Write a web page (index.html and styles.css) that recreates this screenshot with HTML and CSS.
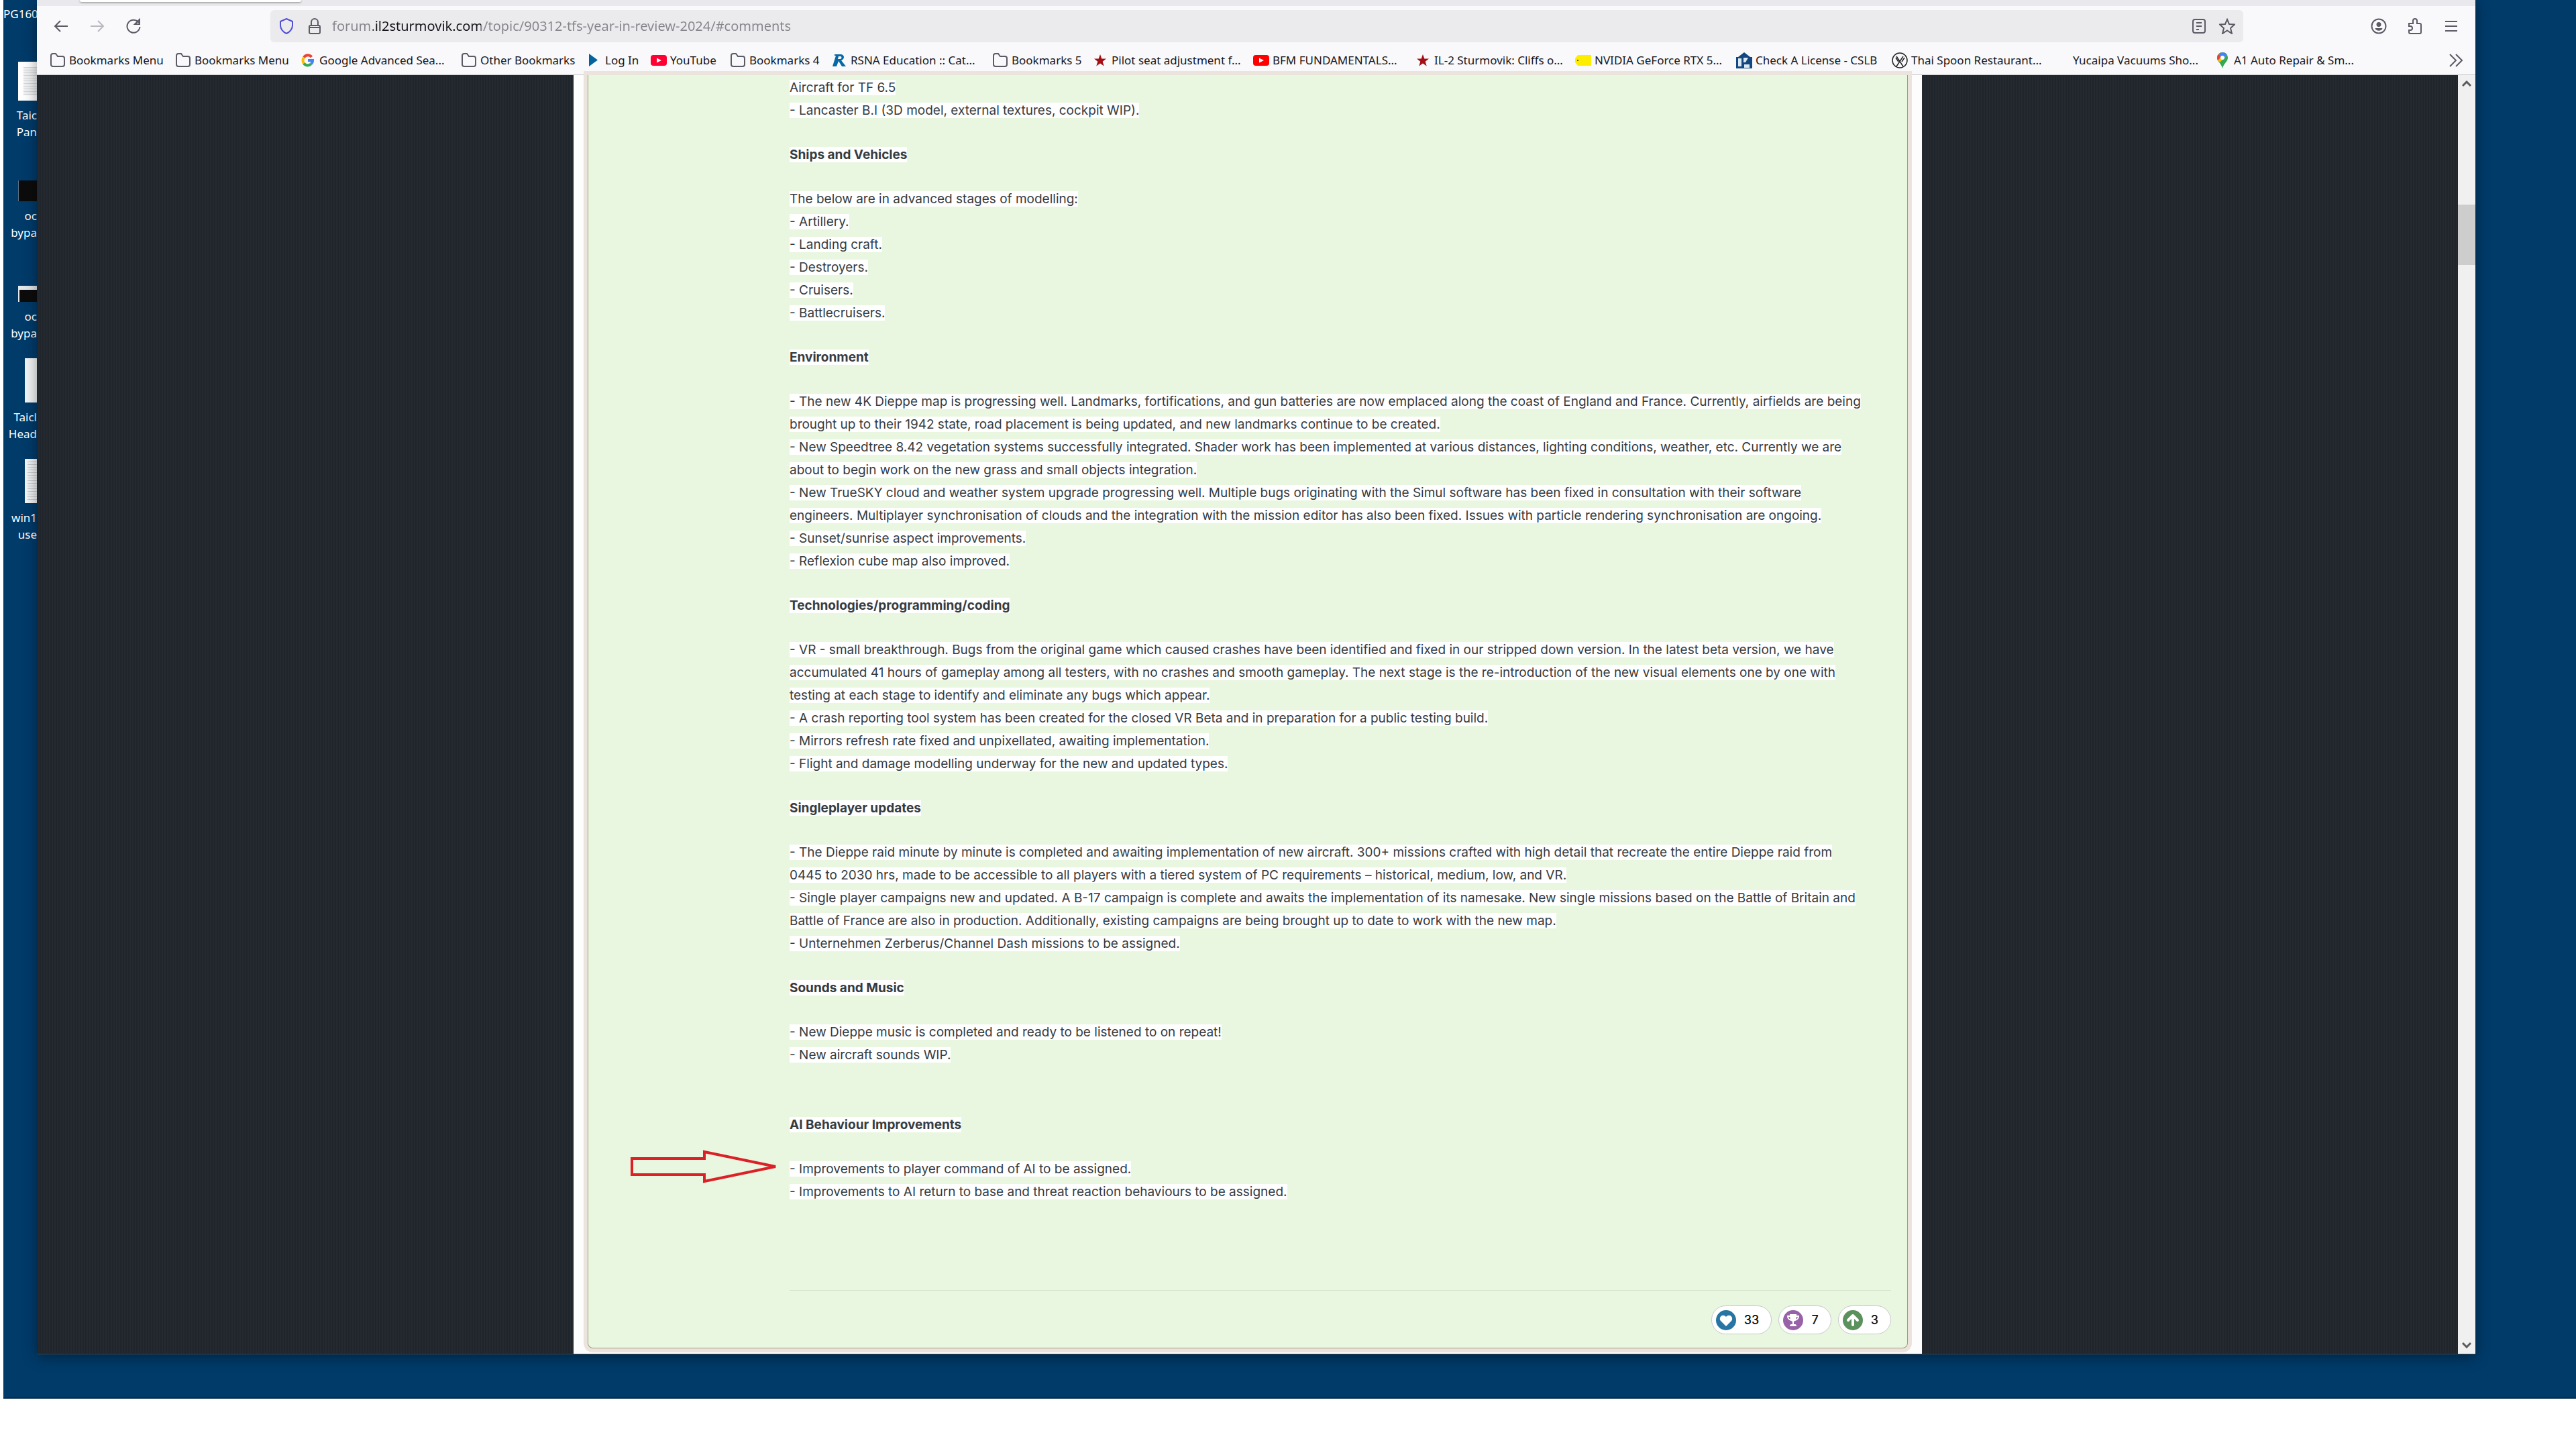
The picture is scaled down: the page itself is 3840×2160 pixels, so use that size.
FILE: index.html
```html
<!DOCTYPE html>
<html lang="en">
<head>
  <meta charset="UTF-8">
  <meta name="viewport" content="width=device-width, initial-scale=1.0">
  <title>TFS Year in Review 2024</title>
  <link rel="stylesheet" href="styles.css">
</head>
<body>
  <!-- shared icons -->
  <svg class="sprite" aria-hidden="true">
    <symbol id="folder" viewBox="0 0 24 24"><path d="M2 5a3 3 0 0 1 3-3h4l3 4h7a3 3 0 0 1 3 3v9a3 3 0 0 1-3 3H5a3 3 0 0 1-3-3z" fill="none" stroke="#5b5b66" stroke-width="2"/></symbol>
    <symbol id="youtube" viewBox="0 0 24 24"><rect y="4" width="24" height="16" rx="4" fill="currentColor"/><path d="M9 8.500l7 3.500-7 3.500z" fill="#fff"/></symbol>
    <symbol id="red-star" viewBox="0 0 24 24"><path d="M12 3l2.300 6.600H21l-5.300 4.200 2 6.800L12 16.500l-5.700 4.100 2-6.800L3 9.600h6.700z" fill="#a30f14"/></symbol>
  </svg>

  <div class="desktop">
    <div class="desktop-icons">
      <div class="desktop-icon first"><span>PG160</span></div>
      <div class="desktop-icon"><div class="thumb"><i class="page chart"></i></div><span>Taic</span><span>Pan</span></div>
      <div class="desktop-icon"><div class="thumb"><i class="console"></i></div><span>oc</span><span>bypa</span></div>
      <div class="desktop-icon"><div class="thumb"><i class="console short"></i></div><span>oc</span><span>bypa</span></div>
      <div class="desktop-icon"><div class="thumb"><i class="page narrow"></i></div><span>Taicl</span><span>Head</span></div>
      <div class="desktop-icon"><div class="thumb"><i class="page narrow lines"></i></div><span>win1</span><span>use</span></div>
    </div>

    <div class="browser">
      <div class="tab-strip"><div class="tab"></div></div>
      <div class="toolbar">
        <div class="nav-buttons">
          <button aria-label="Back"><svg viewBox="0 0 24 24"><path d="M22 12H3M11 4l-8 8 8 8"/></svg></button>
          <button aria-label="Forward" disabled><svg viewBox="0 0 24 24"><path d="M2 12h19M13 4l8 8-8 8"/></svg></button>
          <button aria-label="Reload"><svg viewBox="0 0 24 24"><path d="M20 7a9.500 9.500 0 1 0 1.500 6M21 2v7h-7z"/></svg></button>
        </div>
        <div class="url-bar">
          <svg viewBox="0 0 24 24"><path d="M12 1l9 4v6c0 5-4 10-9 12-5-2-9-7-9-12V5z" stroke="#5050d8"/></svg>
          <svg viewBox="0 0 24 24"><rect x="4" y="11" width="16" height="12" rx="2"/><path d="M7 11V6a5 5 0 0 1 10 0v5M4 14h16"/></svg>
          <input type="text" aria-label="Address" value="forum.il2sturmovik.com/topic/90312-tfs-year-in-review-2024/#comments">
          <button aria-label="Reader view"><svg viewBox="0 0 24 24"><rect x="3" y="2" width="18" height="20" rx="3"/><path d="M8 7h8M8 12h8M8 17h4"/></svg></button>
          <button aria-label="Bookmark this page"><svg viewBox="0 0 24 24"><path d="M12 2l3 7 8 .500-6 5.500 2 8-7-4.500L5 23l2-8-6-5.500L9 9z"/></svg></button>
        </div>
        <div class="tool-buttons">
          <button aria-label="Account"><svg viewBox="0 0 24 24"><circle cx="12" cy="12" r="10.500"/><path d="M12 6a3 3 0 0 0 0 7 3 3 0 0 0 0-7zM6.500 15h11c-1 5-10 5-11 0z" fill="#5b5b66" stroke="none"/></svg></button>
          <button aria-label="Extensions"><svg viewBox="0 0 24 24"><path d="M3 8h6V4a3 3 0 0 1 6 0v4h4a2 2 0 0 1 2 2v11a2 2 0 0 1-2 2H5a2 2 0 0 1-2-2v-3h2a3 3 0 0 0 0-6H3z"/></svg></button>
          <button aria-label="Menu"><svg viewBox="0 0 24 24"><path d="M3 5h18M3 12h18M3 19h18"/></svg></button>
        </div>
      </div>

      <nav class="bookmarks">
        <a href="#"><svg><use href="#folder"/></svg>Bookmarks Menu</a>
        <a href="#"><svg><use href="#folder"/></svg>Bookmarks Menu</a>
        <a href="#"><svg viewBox="0 0 24 24"><g fill="none" stroke-width="4"><path d="M6 7.500A7 7 0 0 1 17.500 7" stroke="#ea4335"/><path d="M6 7.500a8 8 0 0 0 0 9" stroke="#fbbc05"/><path d="M6 16.500a7 7 0 0 0 10.500 1" stroke="#34a853"/><path d="M16.500 17.500A7 7 0 0 0 19 12h-7" stroke="#4285f4"/></g></svg>Google Advanced Sea...</a>
        <a href="#"><svg><use href="#folder"/></svg>Other Bookmarks</a>
        <a href="#"><svg viewBox="0 0 24 24"><path d="M5 2l13 9.500L5 21z" fill="#05629b"/></svg>Log In</a>
        <a href="#"><svg class="yt-new"><use href="#youtube"/></svg>YouTube</a>
        <a href="#"><svg><use href="#folder"/></svg>Bookmarks 4</a>
        <a href="#"><svg viewBox="0 0 24 24"><path d="M5 3h9c6 0 7 7 1 9l7 9h-6l-5-8-3 8H2l5-16H5z" fill="#0768a8"/><path d="M11 6h3c2 0 2 4-1 4h-3z" fill="#fff"/></svg>RSNA Education :: Cat...</a>
        <a href="#"><svg><use href="#folder"/></svg>Bookmarks 5</a>
        <a href="#"><svg><use href="#red-star"/></svg>Pilot seat adjustment f...</a>
        <a href="#"><svg class="yt"><use href="#youtube"/></svg>BFM FUNDAMENTALS...</a>
        <a href="#"><svg><use href="#red-star"/></svg>IL-2 Sturmovik: Cliffs o...</a>
        <a href="#"><svg viewBox="0 0 24 24"><path d="M4 4h20v16H4l-4-5V9z" fill="#ffed00"/><circle cx="4" cy="12" r="1" fill="#222"/></svg>NVIDIA GeForce RTX 5...</a>
        <a href="#"><svg viewBox="0 0 24 24"><path d="M0 24V7h3l9-7 9 7h3v17z" fill="#12477f"/><path d="M3 9h5v12H3zM11 8h7l-4 7h-3zM12 18h8v5h-8z" fill="#dce8f2"/></svg>Check A License - CSLB</a>
        <a href="#"><svg viewBox="0 0 24 24"><circle cx="12" cy="12" r="11" fill="none" stroke="#222" stroke-width="1.500"/><path d="M7 21L17 6M17 21L7 6M6 8l4 6M19 8l-4 6" fill="none" stroke="#222" stroke-width="1.500"/></svg>Thai Spoon Restaurant...</a>
        <a href="#"><svg></svg>Yucaipa Vacuums Sho...</a>
        <a href="#"><svg viewBox="0 0 24 24"><path d="M12 0a8 8 0 0 0-8 8c0 6 6 8 8 16 2-8 8-10 8-16a8 8 0 0 0-8-8z" fill="#34a853"/><path d="M12 0a8 8 0 0 1 7 4L8 15C5 12 4 10 4 8a8 8 0 0 1 8-8z" fill="#fbbc04"/><path d="M12 0a8 8 0 0 1 7 4l-7 7-6-8a8 8 0 0 1 6-3z" fill="#4285f4"/><path d="M6 3l4 4-5 5C3 9 4 5 6 3z" fill="#ea4335"/><circle cx="12" cy="8" r="3" fill="#fff"/></svg>A1 Auto Repair &amp; Sm...</a>
        <button aria-label="More bookmarks"><svg viewBox="0 0 24 24"><path d="M3 3l9 9-9 9M12 3l9 9-9 9"/></svg></button>
      </nav>

      <div class="viewport">
        <main class="page-body">
          <div class="forum">
            <article class="post">
              <div class="post-content">
                <p><span>Aircraft for TF 6.5<br>
                  - Lancaster B.I (3D model, external textures, cockpit WIP).</span></p>

                <h2><span>Ships and Vehicles</span></h2>
                <p><span>The below are in advanced stages of modelling:<br>
                  - Artillery.<br>
                  - Landing craft.<br>
                  - Destroyers.<br>
                  - Cruisers.<br>
                  - Battlecruisers.</span></p>

                <h2><span>Environment</span></h2>
                <p><span>- The new 4K Dieppe map is progressing well. Landmarks, fortifications, and gun batteries are now emplaced along the coast of England and France. Currently, airfields are being<br>
                  brought up to their 1942 state, road placement is being updated, and new landmarks continue to be created.<br>
                  - New Speedtree 8.42 vegetation systems successfully integrated. Shader work has been implemented at various distances, lighting conditions, weather, etc. Currently we are<br>
                  about to begin work on the new grass and small objects integration.<br>
                  - New TrueSKY cloud and weather system upgrade progressing well. Multiple bugs originating with the Simul software has been fixed in consultation with their software<br>
                  engineers. Multiplayer synchronisation of clouds and the integration with the mission editor has also been fixed. Issues with particle rendering synchronisation are ongoing.<br>
                  - Sunset/sunrise aspect improvements.<br>
                  - Reflexion cube map also improved.</span></p>

                <h2><span>Technologies/programming/coding</span></h2>
                <p><span>- VR - small breakthrough. Bugs from the original game which caused crashes have been identified and fixed in our stripped down version. In the latest beta version, we have<br>
                  accumulated 41 hours of gameplay among all testers, with no crashes and smooth gameplay. The next stage is the re-introduction of the new visual elements one by one with<br>
                  testing at each stage to identify and eliminate any bugs which appear.<br>
                  - A crash reporting tool system has been created for the closed VR Beta and in preparation for a public testing build.<br>
                  - Mirrors refresh rate fixed and unpixellated, awaiting implementation.<br>
                  - Flight and damage modelling underway for the new and updated types.</span></p>

                <h2><span>Singleplayer updates</span></h2>
                <p><span>- The Dieppe raid minute by minute is completed and awaiting implementation of new aircraft. 300+ missions crafted with high detail that recreate the entire Dieppe raid from<br>
                  0445 to 2030 hrs, made to be accessible to all players with a tiered system of PC requirements – historical, medium, low, and VR.<br>
                  - Single player campaigns new and updated. A B-17 campaign is complete and awaits the implementation of its namesake. New single missions based on the Battle of Britain and<br>
                  Battle of France are also in production. Additionally, existing campaigns are being brought up to date to work with the new map.<br>
                  - Unternehmen Zerberus/Channel Dash missions to be assigned.</span></p>

                <h2><span>Sounds and Music</span></h2>
                <p><span>- New Dieppe music is completed and ready to be listened to on repeat!<br>
                  - New aircraft sounds WIP.</span></p>

                <h2 class="spaced"><span>AI Behaviour Improvements</span></h2>
                <p class="marked">
                  <svg class="arrow" viewBox="0 0 220 50"><path d="M3 13h108V3l106 22-106 22V37H3z"/></svg>
                  <span>- Improvements to player command of AI to be assigned.<br>
                  - Improvements to AI return to base and threat reaction behaviours to be assigned.</span></p>
              </div>

              <footer class="reactions">
                <button><svg viewBox="0 0 30 30"><circle cx="15" cy="15" r="15" fill="#2875a3"/><path d="M15 24L7 16c-4-5 3-12 8-6 5-6 12 1 8 6z" fill="#fff"/></svg>33</button>
                <button><svg viewBox="0 0 30 30"><circle cx="15" cy="15" r="15" fill="#9862a8"/><path d="M10 6h10c0 7-1 10-4 11v4h2c1 0 2 1 2 3H10c0-2 1-3 2-3h2v-4c-3-1-4-4-4-11z" fill="#fff"/><path d="M11 9H7c0 4 2 5 5 6M19 9h4c0 4-2 5-5 6" fill="none" stroke="#fff" stroke-width="2"/></svg>7</button>
                <button><svg viewBox="0 0 30 30"><circle cx="15" cy="15" r="15" fill="#5b915c"/><path d="M15 22V9M8 15l7-7 7 7" fill="none" stroke="#fff" stroke-width="4" stroke-linecap="round" stroke-linejoin="round"/></svg>3</button>
              </footer>
            </article>
          </div>
        </main>
        <div class="scrollbar">
          <svg viewBox="0 0 14 10"><path d="M1 8l6-6 6 6"/></svg>
          <div class="thumb-bar"></div>
          <svg viewBox="0 0 14 10"><path d="M1 2l6 6 6-6"/></svg>
        </div>
      </div>
    </div>
  </div>
</body>
</html>
```

FILE: styles.css
```css
* {
  box-sizing: border-box;
}

body {
  margin: 0;
  background-color: #fff;
  font-family: "Noto Sans", "Open Sans", sans-serif;
}

button {
  display: flex;
  align-items: center;
  padding: 0;
  border: none;
  background: none;
}

.sprite {
  display: none;
}

/* Desktop */
.desktop {
  display: flex;
  min-height: calc(100vh - 75px);
  margin-left: 5px;
  padding: 0 150px 64px 0;
  background-color: #003b6a;
  border-bottom: 2px solid #032a4a;
}

.desktop-icons {
  width: 50px;
}

.desktop-icon {
  height: 150px;
  color: #fff;
  font-size: 17px;
  line-height: 25px;
}

.desktop-icon.first {
  height: 84px;
  padding-top: 8px;
}

.desktop-icon span {
  display: block;
  text-align: right;
  white-space: nowrap;
}

.thumb {
  display: flex;
  align-items: flex-end;
  justify-content: flex-end;
  height: 66px;
  margin-bottom: 9px;
}

.page {
  width: 28px;
  height: 58px;
  background-color: #f4f5f6;
}

.page.narrow {
  width: 18px;
  height: 66px;
}

.page.chart {
  border: 8px solid #fff;
  border-right: none;
  background: repeating-linear-gradient(#d5d7d9 0 1px, #f1f2f3 1px 4px);
}

.page.lines {
  border: 4px solid #f6f6f6;
  border-right: none;
  background: repeating-linear-gradient(#c9cccf 0 1px, #f3f4f5 1px 4px);
}

.console {
  width: 28px;
  height: 31px;
  background-color: #0c0c0c;
  border-left: 1px solid #5d7488;
}

.console.short {
  height: 24px;
  border-left: 2px solid #e4e8ea;
  border-top: 6px solid #e4e8ea;
}

/* Browser window */
.browser {
  display: flex;
  flex-direction: column;
  flex: 1;
  min-width: 0;
  border-bottom: 1px solid #3c4248;
  box-shadow: 0 4px 20px rgba(0, 0, 0, 0.4);
  z-index: 1;
}

.tab-strip {
  height: 9px;
  background-color: #e9e9ed;
}

.tab {
  width: 330px;
  height: 3px;
  margin-left: 64px;
  background-color: #fff;
  border-radius: 0 0 4px 4px;
  box-shadow: 0 1px 3px rgba(0, 0, 0, 0.4);
}

.toolbar {
  display: flex;
  align-items: center;
  height: 59px;
  padding: 0 24px;
  background-color: #f9f9fb;
}

.toolbar svg,
.bookmarks svg {
  width: 24px;
  height: 24px;
  flex: none;
}

.toolbar svg,
.bookmarks button svg {
  fill: none;
  stroke: #5b5b66;
  stroke-width: 2;
}

.nav-buttons {
  display: flex;
  gap: 30px;
  width: 324px;
}

.nav-buttons button:disabled {
  opacity: 0.4;
}

.url-bar {
  display: flex;
  align-items: center;
  flex: 1;
  gap: 18px;
  height: 48px;
  padding: 0 12px;
  background-color: #ebebed;
  border-radius: 6px;
}

.url-bar input {
  flex: 1;
  min-width: 0;
  height: 32px;
  margin-left: -4px;
  padding: 0;
  border: none;
  outline: none;
  font-family: inherit;
  font-size: 20px;
  color: transparent;
  /* the host name is darker than the rest of the address */
  background: linear-gradient(90deg, #85858c 0 61px, #15141a 61px 222px, #85858c 222px);
  -webkit-background-clip: text;
  background-clip: text;
}

.tool-buttons {
  display: flex;
  justify-content: flex-end;
  gap: 30px;
  width: 322px;
}

.bookmarks {
  display: grid;
  grid-template-columns: 187px 186px 240px 186px 97px 118px 151px 240px 149px 240px 241px 239px 240px 232px 241px 240px 240px 1fr;
  align-items: center;
  height: 44px;
  padding: 0 17px 0 19px;
  background-color: #f9f9fb;
  border-bottom: 1px solid #c4c6c8;
}

.bookmarks a {
  display: flex;
  align-items: center;
  gap: 5px;
  color: #15141a;
  font-size: 17px;
  text-decoration: none;
  white-space: nowrap;
}

.bookmarks button {
  justify-self: end;
}

.yt {
  color: #f00;
}

.yt-new {
  color: #ff0033;
}

/* Forum page */
.viewport {
  display: flex;
  flex: 1;
}

.page-body {
  display: flex;
  flex: 1;
  min-width: 0;
  padding: 0 799px 0 800px;
  background: repeating-linear-gradient(90deg, #20252c 0 2px, #252a31 2px 4px);
}

.forum {
  display: flex;
  flex: 1;
  min-width: 0;
  padding: 0 21px 8px;
  background-color: #fdfdfd;
}

.post {
  display: flex;
  flex-direction: column;
  flex: 1;
  min-width: 0;
  padding: 0 24px 20px 300px;
  background-color: #e9f6e0;
  border: 1px solid #a89878;
  border-top: none;
  border-radius: 0 0 8px 8px;
  box-shadow: 0 0 0 6px #ebe4dc;
}

.post-content {
  flex: 1;
  padding-top: 2px;
  color: #353c41;
  font-family: Inter, sans-serif;
  font-size: 19px;
  line-height: 34px;
  white-space: nowrap;
}

.post-content span {
  background-color: #fff;
}

.post-content p {
  margin: 0;
}

.post-content h2 {
  margin: 32px 0;
  font-size: 19px;
  line-height: 34px;
}

.post-content h2.spaced {
  margin-top: 70px;
}

.marked {
  position: relative;
}

.arrow {
  position: absolute;
  top: -12px;
  left: -238px;
  width: 220px;
  height: 50px;
  fill: none;
  stroke: #dd2026;
  stroke-width: 4;
}

.reactions {
  display: flex;
  justify-content: flex-end;
  gap: 10px;
  padding-top: 22px;
  border-top: 1px solid #d5e0ce;
}

.reactions button {
  gap: 12px;
  height: 43px;
  padding: 0 18px 0 6px;
  background-color: #fff;
  border: 1px solid #c5c9cc;
  border-radius: 22px;
  color: #111;
  font-family: Inter, sans-serif;
  font-size: 18px;
  font-weight: 500;
}

.reactions svg {
  width: 30px;
  height: 30px;
}

/* Scrollbar */
.scrollbar {
  display: flex;
  flex-direction: column;
  flex: none;
  align-items: center;
  width: 26px;
  padding: 8px 0;
  background-color: #f0f0f0;
}

.scrollbar svg {
  width: 14px;
  height: 10px;
  fill: none;
  stroke: #5b5b5b;
  stroke-width: 3;
}

.thumb-bar {
  width: 100%;
  height: 90px;
  margin-top: 175px;
  margin-bottom: auto;
  background-color: #cdcdcd;
}
```
